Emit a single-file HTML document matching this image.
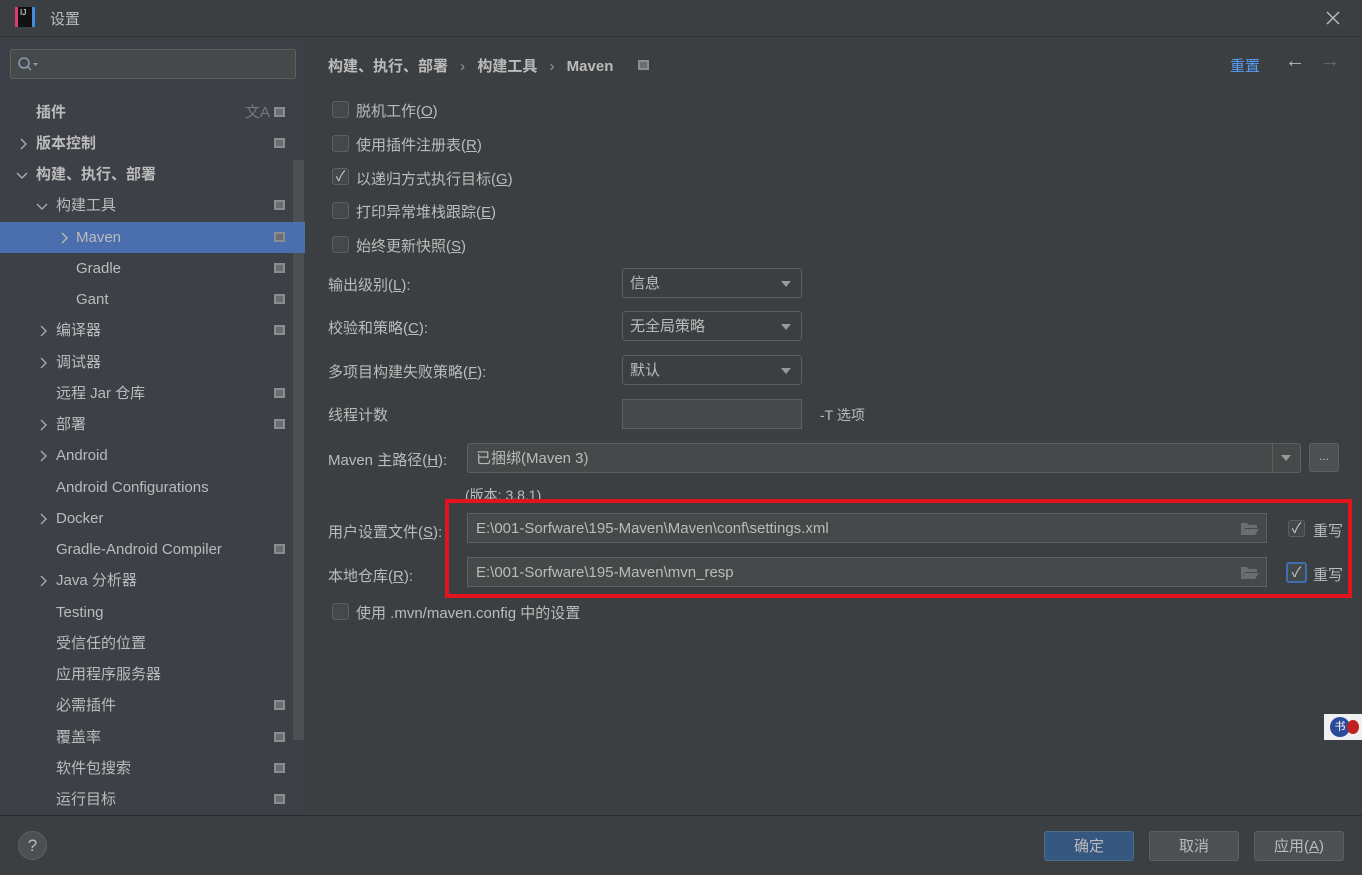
<!DOCTYPE html>
<html><head><meta charset="utf-8"><style>
*{margin:0;padding:0;box-sizing:border-box}
body{width:1362px;height:875px;background:#3c3f41;font-family:"Liberation Sans","Noto Sans CJK SC",sans-serif;color:#bbbbbb;font-size:15px;position:relative;overflow:hidden}
.a{position:absolute;white-space:nowrap}
.side{position:absolute;left:0;top:37px;width:305px;height:778px;background:#3d4047}
.row{position:absolute;left:0;width:305px;height:31px;line-height:31px}
.ic{position:absolute;left:274px;top:10px;width:11px;height:10px;border:2px solid #8a8d90;background:#6a6d70}
.ch{position:absolute;top:10px}
.cb{position:absolute;width:17px;height:17px;border:1px solid #5e6060;border-radius:3px;background:#43494a}
.dd{position:absolute;left:622px;width:180px;height:30px;border:1px solid #5e6060;border-radius:3px;background:#3c3f41;line-height:30px;padding-left:7px}
.dd:after{content:"";position:absolute;right:10px;top:12px;border-left:5px solid transparent;border-right:5px solid transparent;border-top:6px solid #999}
.tf{position:absolute;height:30px;border:1px solid #5e6060;background:#45494a;line-height:30px;padding-left:8px}
.btn{position:absolute;top:831px;width:90px;height:30px;border:1px solid #5e6060;border-radius:3px;background:#4c5052;text-align:center;line-height:30px}
u{text-decoration:underline}
</style></head><body>
<div class="a" style="left:15px;top:7px;width:20px;height:20px;background:#111;border-left:3px solid #e0377a;border-right:3px solid #3b8fe0;color:#fff;font-size:8px;line-height:12px;padding-left:2px">IJ</div>
<div class="a" style="left:50px;top:8px;font-size:15px">设置</div>
<svg class="a" style="left:1326px;top:11px" width="14" height="14"><path d="M1 1L13 13M13 1L1 13" stroke="#bbb" stroke-width="1.5"/></svg>
<div class="a" style="left:0;top:36px;width:1362px;height:1px;background:#323232"></div>
<div class="side"></div>
<div class="a" style="left:10px;top:49px;width:286px;height:30px;border:1px solid #5e6060;border-radius:3px;background:#45494a"></div>
<svg class="a" style="left:17px;top:56px" width="22" height="16"><circle cx="7" cy="7" r="5" fill="none" stroke="#8a9fb0" stroke-width="1.5"/><line x1="11" y1="11" x2="14" y2="14" stroke="#8a9fb0" stroke-width="1.5"/><path d="M16 7h5l-2.5 3z" fill="#8a9fb0"/></svg>
<div class="a" style="left:293px;top:160px;width:11px;height:580px;background:#4d5052"></div>
<div class="a" style="left:0;top:222px;width:305px;height:31px;background:#4b6eaf"></div>

<div class="row" style="top:97px"><span class="a" style="left:36px;font-weight:bold">插件</span><span class="a" style="left:245px;color:#777;font-size:15px">文A</span><div class="ic"></div></div>
<div class="row" style="top:128px"><svg class="ch" style="left:18px" width="10" height="12"><path d="M3 1l5 5-5 5" fill="none" stroke="#aaa" stroke-width="1.4"/></svg><span class="a" style="left:36px;font-weight:bold">版本控制</span><div class="ic"></div></div>
<div class="row" style="top:159px"><svg class="ch" style="left:16px;top:12px" width="12" height="10"><path d="M1 2l5 5 5-5" fill="none" stroke="#aaa" stroke-width="1.4"/></svg><span class="a" style="left:36px;font-weight:bold">构建、执行、部署</span></div>
<div class="row" style="top:190px"><svg class="ch" style="left:36px;top:12px" width="12" height="10"><path d="M1 2l5 5 5-5" fill="none" stroke="#aaa" stroke-width="1.4"/></svg><span class="a" style="left:56px">构建工具</span><div class="ic"></div></div>
<div class="row" style="top:222px"><svg class="ch" style="left:59px" width="10" height="12"><path d="M3 1l5 5-5 5" fill="none" stroke="#bbb" stroke-width="1.4"/></svg><span class="a" style="left:76px">Maven</span><div class="ic"></div></div>
<div class="row" style="top:253px"><span class="a" style="left:76px">Gradle</span><div class="ic"></div></div>
<div class="row" style="top:284px"><span class="a" style="left:76px">Gant</span><div class="ic"></div></div>
<div class="row" style="top:315px"><svg class="ch" style="left:38px" width="10" height="12"><path d="M3 1l5 5-5 5" fill="none" stroke="#aaa" stroke-width="1.4"/></svg><span class="a" style="left:56px">编译器</span><div class="ic"></div></div>
<div class="row" style="top:347px"><svg class="ch" style="left:38px" width="10" height="12"><path d="M3 1l5 5-5 5" fill="none" stroke="#aaa" stroke-width="1.4"/></svg><span class="a" style="left:56px">调试器</span></div>
<div class="row" style="top:378px"><span class="a" style="left:56px">远程 Jar 仓库</span><div class="ic"></div></div>
<div class="row" style="top:409px"><svg class="ch" style="left:38px" width="10" height="12"><path d="M3 1l5 5-5 5" fill="none" stroke="#aaa" stroke-width="1.4"/></svg><span class="a" style="left:56px">部署</span><div class="ic"></div></div>
<div class="row" style="top:440px"><svg class="ch" style="left:38px" width="10" height="12"><path d="M3 1l5 5-5 5" fill="none" stroke="#aaa" stroke-width="1.4"/></svg><span class="a" style="left:56px">Android</span></div>
<div class="row" style="top:472px"><span class="a" style="left:56px">Android Configurations</span></div>
<div class="row" style="top:503px"><svg class="ch" style="left:38px" width="10" height="12"><path d="M3 1l5 5-5 5" fill="none" stroke="#aaa" stroke-width="1.4"/></svg><span class="a" style="left:56px">Docker</span></div>
<div class="row" style="top:534px"><span class="a" style="left:56px">Gradle-Android Compiler</span><div class="ic"></div></div>
<div class="row" style="top:565px"><svg class="ch" style="left:38px" width="10" height="12"><path d="M3 1l5 5-5 5" fill="none" stroke="#aaa" stroke-width="1.4"/></svg><span class="a" style="left:56px">Java 分析器</span></div>
<div class="row" style="top:597px"><span class="a" style="left:56px">Testing</span></div>
<div class="row" style="top:628px"><span class="a" style="left:56px">受信任的位置</span></div>
<div class="row" style="top:659px"><span class="a" style="left:56px">应用程序服务器</span></div>
<div class="row" style="top:690px"><span class="a" style="left:56px">必需插件</span><div class="ic"></div></div>
<div class="row" style="top:722px"><span class="a" style="left:56px">覆盖率</span><div class="ic"></div></div>
<div class="row" style="top:753px"><span class="a" style="left:56px">软件包搜索</span><div class="ic"></div></div>
<div class="row" style="top:784px"><span class="a" style="left:56px">运行目标</span><div class="ic"></div></div>

<div class="a" style="left:328px;top:55px;font-weight:bold">构建、执行、部署 <span style="font-weight:normal;color:#999;margin:0 8px">›</span> 构建工具 <span style="font-weight:normal;color:#999;margin:0 8px">›</span> Maven</div>
<div class="a" style="left:638px;top:60px;width:11px;height:10px;border:2px solid #8a8d90;background:#6a6d70"></div>
<div class="a" style="left:1230px;top:55px;color:#589df6">重置</div>
<div class="a" style="left:1285px;top:50px;font-size:20px;color:#bbb">←</div>
<div class="a" style="left:1320px;top:50px;font-size:20px;color:#666">→</div>

<div class="cb" style="left:332px;top:101px"></div><div class="a" style="left:356px;top:100px">脱机工作(<u>O</u>)</div>
<div class="cb" style="left:332px;top:135px"></div><div class="a" style="left:356px;top:134px">使用插件注册表(<u>R</u>)</div>
<div class="cb" style="left:332px;top:168px;color:#ccc;font-size:14px;line-height:15px;text-align:center">✓</div><div class="a" style="left:356px;top:168px">以递归方式执行目标(<u>G</u>)</div>
<div class="cb" style="left:332px;top:202px"></div><div class="a" style="left:356px;top:201px">打印异常堆栈跟踪(<u>E</u>)</div>
<div class="cb" style="left:332px;top:236px"></div><div class="a" style="left:356px;top:235px">始终更新快照(<u>S</u>)</div>

<div class="a" style="left:328px;top:274px">输出级别(<u>L</u>):</div><div class="dd" style="top:268px">信息</div>
<div class="a" style="left:328px;top:317px">校验和策略(<u>C</u>):</div><div class="dd" style="top:311px">无全局策略</div>
<div class="a" style="left:328px;top:361px">多项目构建失败策略(<u>F</u>):</div><div class="dd" style="top:355px">默认</div>
<div class="a" style="left:328px;top:404px">线程计数</div><div class="a" style="left:622px;top:399px;width:180px;height:30px;border:1px solid #5e6060;background:#45494a"></div><div class="a" style="left:820px;top:405px;font-size:14px">-T 选项</div>
<div class="a" style="left:328px;top:449px">Maven 主路径(<u>H</u>):</div>
<div class="tf" style="left:467px;top:443px;width:834px;border-radius:3px">已捆绑(Maven 3)</div>
<div class="a" style="left:1272px;top:444px;width:1px;height:28px;background:#5e6060"></div>
<div class="a" style="left:1281px;top:455px;border-left:5px solid transparent;border-right:5px solid transparent;border-top:6px solid #999"></div>
<div class="a" style="left:1309px;top:443px;width:30px;height:29px;border:1px solid #5e6060;border-radius:3px;background:#4c5052;text-align:center;font-size:12px;line-height:24px">...</div>
<div class="a" style="left:465px;top:485px;font-size:14px">(版本: 3.8.1)</div>

<div class="a" style="left:328px;top:521px">用户设置文件(<u>S</u>):</div>
<div class="tf" style="left:467px;top:513px;width:800px">E:\001-Sorfware\195-Maven\Maven\conf\settings.xml</div>
<div class="a" style="left:328px;top:565px">本地仓库(<u>R</u>):</div>
<div class="tf" style="left:467px;top:557px;width:800px">E:\001-Sorfware\195-Maven\mvn_resp</div>
<svg class="a" style="left:1240px;top:521px" width="20" height="14"><path d="M1 2h6l2 2h8v3H5l-4 7z M5 8h14l-4 6H1z" fill="#6b6e70"/></svg>
<svg class="a" style="left:1240px;top:565px" width="20" height="14"><path d="M1 2h6l2 2h8v3H5l-4 7z M5 8h14l-4 6H1z" fill="#6b6e70"/></svg>
<div class="cb" style="left:1288px;top:520px;color:#ccc;font-size:14px;line-height:15px;text-align:center">✓</div><div class="a" style="left:1313px;top:520px">重写</div>
<div class="cb" style="left:1286px;top:562px;width:21px;height:21px;border:2px solid #3d6fb5;color:#ccc;font-size:14px;line-height:16px;text-align:center">✓</div><div class="a" style="left:1313px;top:564px">重写</div>
<div class="a" style="left:445px;top:499px;width:907px;height:99px;border:4px solid #e3141e"></div>

<div class="cb" style="left:332px;top:603px"></div><div class="a" style="left:356px;top:602px">使用 .mvn/maven.config 中的设置</div>

<div class="a" style="left:1324px;top:714px;width:38px;height:26px;background:#f0f0f0"></div>
<div class="a" style="left:1330px;top:717px;width:20px;height:20px;border-radius:50%;background:#2a4a9a;color:#fff;font-size:11px;text-align:center;line-height:20px">书</div>
<div class="a" style="left:1347px;top:720px;width:12px;height:14px;border-radius:50%;background:#c02020"></div>

<div class="a" style="left:0;top:815px;width:1362px;height:1px;background:#2b2b2b"></div>
<div class="a" style="left:18px;top:831px;width:29px;height:29px;border-radius:50%;background:#4c5052;border:1px solid #5e6060;text-align:center;line-height:27px;font-size:17px">?</div>
<div class="btn" style="left:1044px;background:#365880;border-color:#4c708c">确定</div>
<div class="btn" style="left:1149px">取消</div>
<div class="btn" style="left:1254px">应用(<u>A</u>)</div>
</body></html>
